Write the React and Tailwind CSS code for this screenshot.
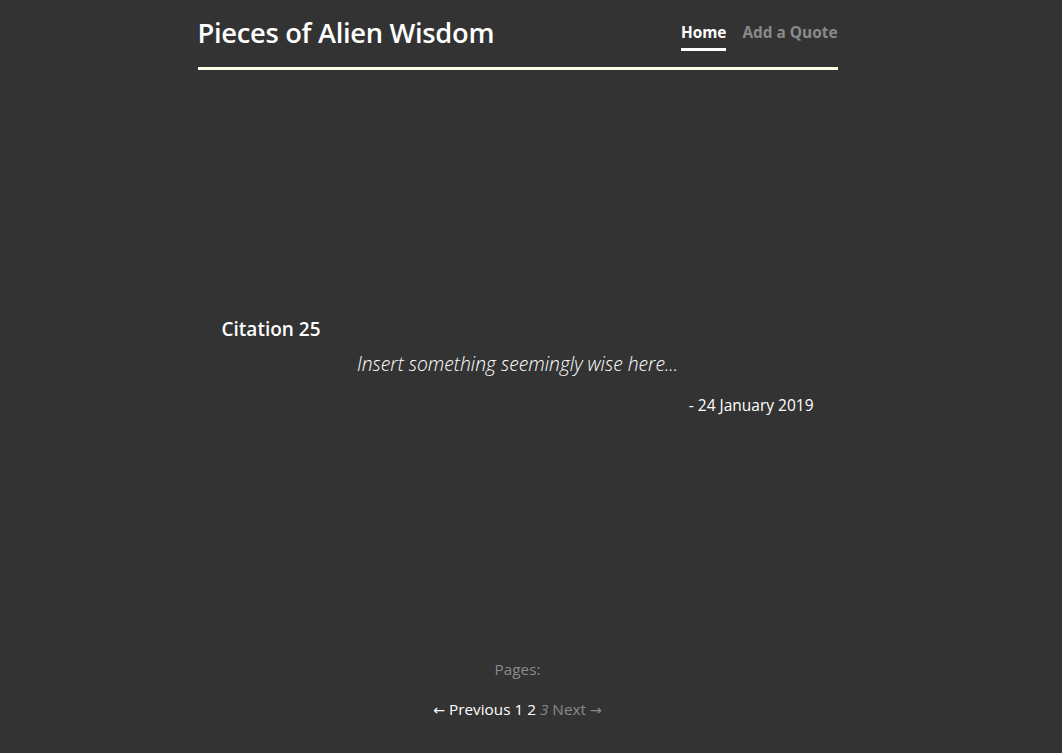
import React from 'react';

export default function App() {
  return (
    <div className="min-h-screen bg-[#333333] text-white font-['Open_Sans',sans-serif] pr-[27px]">
      <div className="w-[640px] mx-auto flex flex-col min-h-[753px]">
        {/* Header */}
        <header className="flex items-end justify-between border-b-[3px] border-[#fdfde8] pt-[15px] pb-[16px]">
          <h1 className="text-[27.3px] leading-[36px] font-semibold tracking-[-0.3px]">Pieces of Alien Wisdom</h1>
          <nav className="flex gap-[16px] text-[15.4px] font-bold leading-[20px]">
            <a className="text-white border-b-[3px] border-white pb-[5px]">Home</a>
            <a className="text-[#8a8a8a] pb-[8px]">Add a Quote</a>
          </nav>
        </header>

        {/* Quote */}
        <main className="flex-1 flex flex-col justify-center px-[24px] pt-[3px]">
          <h2 className="text-[19px] font-semibold leading-[24px]">Citation 25</h2>
          <p className="text-center italic font-light text-[19.3px] leading-[26px] mt-[10px]">
            Insert something seemingly wise here...
          </p>
          <p className="text-right text-[15.5px] leading-[20px] mt-[18px]">- 24 January 2019</p>
        </main>

        {/* Pagination */}
        <footer className="text-center text-[15.3px] pb-[33px]">
          <p className="text-[#8a8a8a] leading-[20px]">Pages:</p>
          <p className="mt-[20px] leading-[20px]">
            <span className="font-['DejaVu_Sans',sans-serif] text-[14px]">←</span> <span>Previous</span>{' '}
            <span>1</span> <span>2</span> <span className="italic text-[#8a8a8a]">3</span>{' '}
            <span className="text-[#8a8a8a]">
              Next <span className="font-['DejaVu_Sans',sans-serif] text-[14px]">→</span>
            </span>
          </p>
        </footer>
      </div>
    </div>
  );
}
